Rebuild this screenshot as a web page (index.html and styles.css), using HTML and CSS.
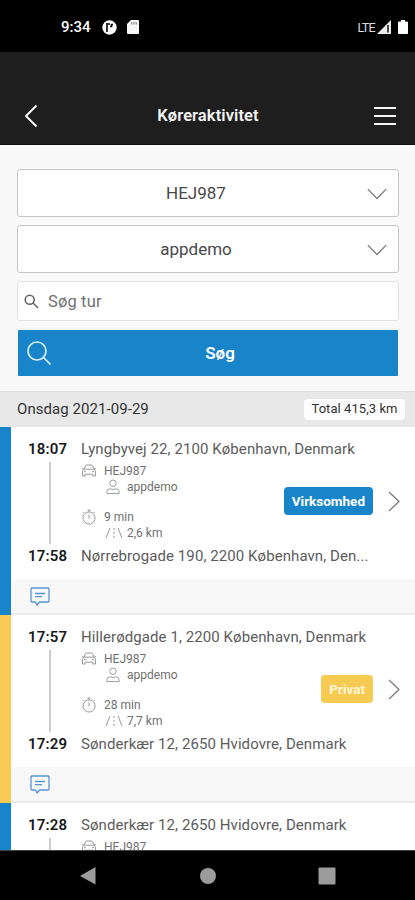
FILE: index.html
```
<!DOCTYPE html>
<html lang="da">
<head>
<meta charset="utf-8">
<title>Køreraktivitet</title>
<link rel="stylesheet" href="styles.css">
</head>
<body>
<svg class="defs" aria-hidden="true">
  <symbol id="car" viewBox="0 0 16 14"><path d="M3 5 4.4 1.8Q4.8 1 5.8 1h4.4q1 0 1.4.8L13 5M1 4.6l2 .6h10l2-.6M3 5.2Q1.5 6 1.5 7.5V12h2.600v-1.800h7.800V12h2.600V7.500Q14.500 6 13 5.200M3 7.700h2M11 7.700h2"/></symbol>
  <symbol id="person" viewBox="0 0 16 17"><circle cx="8" cy="4.500" r="3.400"/><path d="M1.500 15.500v-2q0-3 3-3 3.500 1.200 7 0 3 0 3 3v2z"/></symbol>
  <symbol id="watch" viewBox="0 0 16 16"><path d="M8 3a6 6 0 1 0 .1 0M8 3V1M6.500 1h3M8 5.500v4M2.300 4l1-1M13.700 4l-1-1"/></symbol>
  <symbol id="road" viewBox="0 0 18 12"><path d="M5 1 1 11M13 1l4 10M9 1v2M9 5v2M9 9v2"/></symbol>
  <symbol id="note" viewBox="0 0 20 19"><path d="M2 1h16q1 0 1 1v12q0 1-1 1H9.500L7 18l-1.500-3H2q-1 0-1-1V2q0-1 1-1zM5 6.500h10M5 9.700h7"/></symbol>
  <symbol id="down" viewBox="0 0 20 12"><path d="m.8 1.200 9.200 9.300 9.200-9.300"/></symbol>
  <symbol id="right" viewBox="0 0 12 21"><path d="m1 1 10 9.500L1 20"/></symbol>
</svg>
<div class="phone">
  <div class="status">
    <span class="clock">9:34</span>
    <svg class="disc" viewBox="0 0 15 15"><circle cx="7.500" cy="7.500" r="7.200" fill="#fff"/><path d="M5 3v9M5 4h3M11 4.500h-1.500v2H8" fill="none" stroke="#111" stroke-width="1.700"/></svg>
    <svg class="card-icon" viewBox="0 0 12 14"><path d="M4 0h7q1 0 1 1v12q0 1-1 1H1q-1 0-1-1V4z" fill="#f5f5f5"/><path d="M4.800 2v2.500M7 2v2.500M9.200 2v2.500" stroke="#777"/></svg>
    <span class="lte">LTE</span>
    <svg class="signal" viewBox="0 0 14 14"><path d="M0 14 14 0v14z" fill="#eee"/><path d="M11 5v7.500" stroke="#111" stroke-width="1.500"/></svg>
    <svg class="battery" viewBox="0 0 10 14"><path d="M3 0h4v1.500h2q1 0 1 1V13q0 1-1 1H1q-1 0-1-1V2.500q0-1 1-1h2z" fill="#fff"/></svg>
  </div>
  <header class="bar">
    <svg class="back" viewBox="0 0 14 24"><path d="M12.500 1.500 2 12l10.500 10.500"/></svg>
    <h1>Køreraktivitet</h1>
    <svg class="menu" viewBox="0 0 24 20"><path d="M1 1.900h22M1 10h22M1 18h22"/></svg>
  </header>
  <section class="filters">
    <div class="select"><span class="plate">HEJ987</span><svg><use href="#down"/></svg></div>
    <div class="select"><span class="user">appdemo</span><svg><use href="#down"/></svg></div>
    <div class="search"><svg viewBox="0 0 15 15"><circle cx="5.700" cy="5.700" r="4.500"/><path d="m9 9 5 5"/></svg><span>Søg tur</span></div>
    <div class="submit"><svg viewBox="0 0 24 24"><circle cx="10" cy="10" r="9"/><path d="m16.500 16.500 7 7"/></svg><span>Søg</span></div>
  </section>
  <div class="day"><span class="date">Onsdag 2021-09-29</span><span class="total">Total 415,3 km</span></div>
  <main class="trips">
    <article class="trip business">
      <div class="body">
        <div class="times"><b>18:07</b><i></i><b>17:58</b></div>
        <div class="info">
          <p class="address">Lyngbyvej 22, 2100 København, Denmark</p>
          <div class="meta"><svg class="car"><use href="#car"/></svg>HEJ987</div>
          <div class="meta sub"><svg class="person"><use href="#person"/></svg>appdemo</div>
          <div class="meta time"><svg class="watch"><use href="#watch"/></svg>9 min</div>
          <div class="meta sub"><svg class="road"><use href="#road"/></svg>2,6 km</div>
          <p class="address end">Nørrebrogade 190, 2200 København, Den...</p>
        </div>
        <div class="type"><span class="tag">Virksomhed</span><svg><use href="#right"/></svg></div>
      </div>
      <div class="foot"><svg><use href="#note"/></svg></div>
    </article>
    <article class="trip private">
      <div class="body">
        <div class="times"><b>17:57</b><i></i><b>17:29</b></div>
        <div class="info">
          <p class="address">Hillerødgade 1, 2200 København, Denmark</p>
          <div class="meta"><svg class="car"><use href="#car"/></svg>HEJ987</div>
          <div class="meta sub"><svg class="person"><use href="#person"/></svg>appdemo</div>
          <div class="meta time"><svg class="watch"><use href="#watch"/></svg>28 min</div>
          <div class="meta sub"><svg class="road"><use href="#road"/></svg>7,7 km</div>
          <p class="address end">Sønderkær 12, 2650 Hvidovre, Denmark</p>
        </div>
        <div class="type"><span class="tag">Privat</span><svg><use href="#right"/></svg></div>
      </div>
      <div class="foot"><svg><use href="#note"/></svg></div>
    </article>
    <article class="trip business">
      <div class="body">
        <div class="times"><b>17:28</b><i></i></div>
        <div class="info">
          <p class="address">Sønderkær 12, 2650 Hvidovre, Denmark</p>
          <div class="meta"><svg class="car"><use href="#car"/></svg>HEJ987</div>
        </div>
      </div>
    </article>
  </main>
  <nav class="nav">
    <svg viewBox="0 0 18 20"><path d="M16.500 1v17.500L1 10z"/></svg>
    <svg viewBox="0 0 18 20"><circle cx="9" cy="10" r="8"/></svg>
    <svg viewBox="0 0 18 20"><rect x=".5" y="1.500" width="17" height="17" rx="1"/></svg>
  </nav>
</div>
</body>
</html>
```
FILE: styles.css
```
* { box-sizing: border-box; }
body { margin: 0; font-family: Roboto, "Liberation Sans", sans-serif; color: #484848; background: #fff; }
svg { display: block; flex: none; fill: none; stroke-linejoin: round; }
.defs { display: none; }
.phone { width: 415px; height: 900px; display: flex; flex-direction: column; overflow: hidden; }

.status { height: 52px; flex: none; background: #000; color: #fff; display: flex; align-items: center; padding: 2px 7px 0 61px; }
.clock { width: 41px; font-size: 15px; font-weight: 500; }
.disc { width: 15px; height: 15px; }
.card-icon { width: 12px; height: 14px; margin-left: 10px; }
.lte { margin-left: auto; font-size: 12.500px; letter-spacing: -.7px; color: #ddd; }
.signal { width: 14px; height: 14px; margin-left: 2px; }
.battery { width: 10px; height: 14px; margin-left: 7px; }

.bar { height: 93px; flex: none; background: #1e1e1e; border-bottom: 1px solid #111; display: flex; align-items: center; padding: 36px 18px 0 24px; }
.bar svg { stroke: #f4f4f4; stroke-width: 2; }
.back { width: 14px; height: 24px; }
.menu { width: 24px; height: 20px; }
h1 { flex: 1; margin: 0; padding: 0 0 2px 5px; text-align: center; font-size: 16.500px; font-weight: 600; letter-spacing: .1px; color: #f4f4f4; }

.filters { height: 246px; flex: none; background: #f9f9f9; padding: 24px 16px 0 17px; display: flex; flex-direction: column; }
.select { height: 48px; margin-bottom: 8px; border: 1px solid #c5c5c5; border-radius: 3px; background: #fff; display: flex; align-items: center; padding: 0 11px 0 7px; font-size: 17px; }
.select span { flex: 1; text-align: center; }
.select svg { width: 20px; height: 12px; stroke: #777; stroke-width: 1.200; margin-top: 1px; }
.search { height: 40px; border: 1px solid #e2e2e2; border-radius: 3px; background: #fff; display: flex; align-items: center; padding-left: 6px; gap: 9px; font-size: 16.500px; letter-spacing: .15px; color: #707070; }
.search svg { width: 15px; height: 15px; stroke: #666; stroke-width: 1.600; }
.submit { height: 46px; margin: 9px 1px 0; background: #1884ca; border-radius: 1px; color: #fff; display: flex; align-items: center; padding: 0 9px; font-size: 17px; font-weight: 600; }
.submit svg { width: 24px; height: 24px; stroke: #d9f0ff; stroke-width: 1.700; }
.submit span { flex: 1; text-align: center; }

.day { height: 36px; flex: none; background: #e8e8e8; border-top: 1px solid #ddd; display: flex; align-items: center; justify-content: space-between; padding: 0 10px 1px 17px; font-size: 15px; letter-spacing: .06px; color: #333; }
.total { background: #fdfdfd; border-radius: 4px; height: 21px; line-height: 20px; width: 101px; text-align: center; font-size: 13px; }

.trips { flex: 1; min-height: 0; overflow: hidden; }
.trip { height: 188px; border-left: 11px solid #1884ca; display: flex; flex-direction: column; }
.private { border-left-color: #f7ca52; }
.body { height: 152px; display: flex; padding: 12px 15px 0 17px; }
.times { width: 53px; flex: none; font-size: 15px; letter-spacing: .2px; color: #181818; }
.times b { display: block; height: 20px; line-height: 20px; font-weight: 600; }
.times i { display: block; width: 2px; height: 82px; margin: 3px 0 2px 21px; background: #ccc; }
.info { width: 202px; flex: none; }
.address { margin: 0; height: 20px; line-height: 20px; font-size: 15px; letter-spacing: .08px; white-space: nowrap; color: #5c5c5c; }
.end { margin-top: 5px; }
.meta { height: 16px; display: flex; align-items: center; font-size: 12px; color: #707070; }
.meta svg { stroke: #999; stroke-width: 1; }
.address + .meta { margin-top: 4px; }
.time { margin-top: 14px; }
.car { width: 16px; height: 14px; margin-right: 7px; }
.sub { padding-left: 24px; }
.person { width: 16px; height: 16px; margin-right: 6px; }
.watch { width: 16px; height: 16px; margin-right: 7px; }
.road { width: 18px; height: 12px; margin-right: 4px; }
.type { flex: 1; height: 26px; margin-top: 49px; display: flex; align-items: center; justify-content: flex-end; }
.type svg { width: 12px; height: 21px; margin-left: 15px; stroke: #777; stroke-width: 1.200; }
.tag { height: 28px; line-height: 28px; padding: 0 8px; border-radius: 4px; background: #1884ca; color: #fff; font-size: 13.500px; font-weight: 700; }
.private .tag { background: #f7ca52; color: #fff6d8; }
.foot { height: 36px; background: #f8f8f8; border-bottom: 2px solid #ebebeb; padding: 8px 0 0 19px; }
.foot svg { width: 20px; height: 19px; stroke: #5794d4; stroke-width: 1.300; }

.nav { height: 50px; flex: none; background: #000; border-top: 1px solid #444; display: flex; align-items: center; justify-content: space-between; padding: 0 79px; }
.nav svg { width: 18px; height: 20px; fill: #9b9b9b; }
```
